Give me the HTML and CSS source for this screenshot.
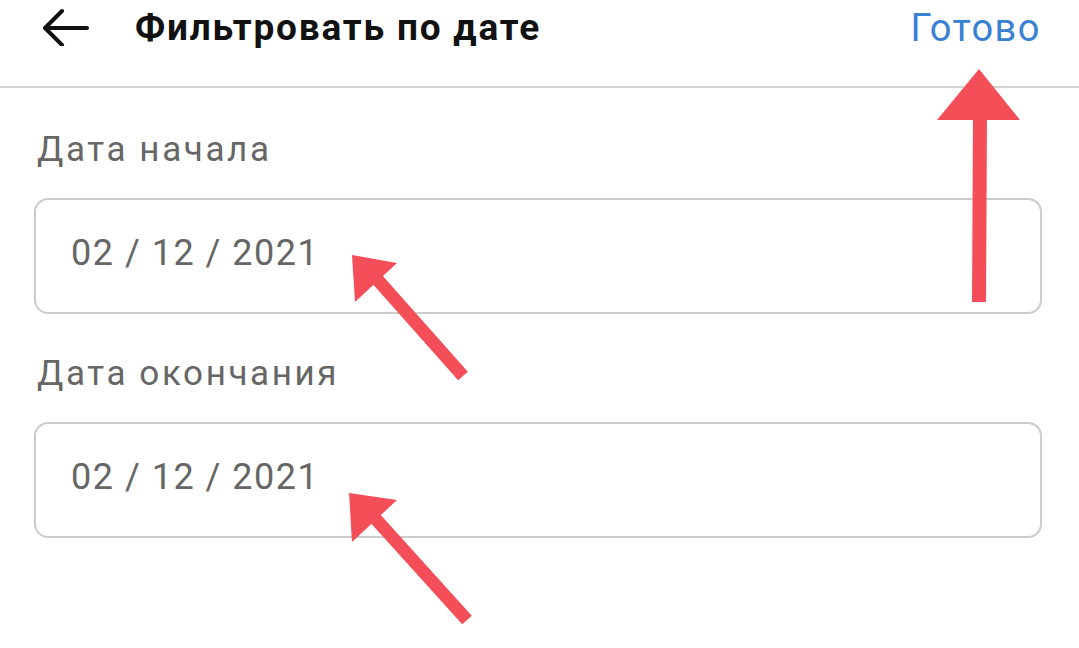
FILE: index.html
```html
<!DOCTYPE html>
<html lang="ru">
<head>
<meta charset="utf-8">
<title>Фильтровать по дате</title>
<link rel="stylesheet" href="styles.css">
</head>
<body>
<div class="page">
  <header class="topbar">
    <div class="left">
      <svg class="back" width="50" height="40" viewBox="0 0 50 40">
        <path d="M47 24H5M22 7L5 24L22 41" fill="none" stroke="#111" stroke-width="4" stroke-linecap="round" stroke-linejoin="round" transform="translate(0,-2)"/>
      </svg>
      <h1 class="title">Фильтровать по дате</h1>
    </div>
    <div class="done">Готово</div>
  </header>
  <main class="form">
    <div class="field">
      <div class="label">Дата начала</div>
      <div class="input">02 / 12 / 2021</div>
    </div>
    <div class="field">
      <div class="label">Дата окончания</div>
      <div class="input">02 / 12 / 2021</div>
    </div>
  </main>
  <svg class="arrows" width="1079" height="648" viewBox="0 0 1079 648">
    <g fill="#f44e59" stroke="none">
      <polygon points="979,69 1020,120 937,120"/>
      <polygon points="352,255 397,263 355,302"/>
      <polygon points="349,493 397,500 352,542"/>
    </g>
    <g stroke="#f44e59" stroke-width="14" fill="none">
      <line x1="980" y1="116" x2="979" y2="302"/>
    </g>
    <g stroke="#f44e59" stroke-width="13" fill="none">
      <line x1="376" y1="278" x2="463" y2="376"/>
      <line x1="373" y1="516" x2="467" y2="620"/>
    </g>
  </svg>
</div>
</body>
</html>
```

FILE: styles.css
```css
html, body {
  margin: 0;
  padding: 0;
  background: #ffffff;
}
.page {
  position: relative;
  width: 1079px;
  height: 648px;
  overflow: hidden;
  font-family: Roboto, "Noto Sans", sans-serif;
}
.topbar {
  height: 86px;
  border-bottom: 2px solid #d4d4d4;
  display: flex;
  align-items: flex-start;
  justify-content: space-between;
  padding: 0 38px 0 40px;
}
.left {
  display: flex;
  align-items: flex-start;
}
.back {
  display: block;
  margin-top: 6px;
}
.title {
  margin: 0 0 0 45px;
  font-size: 37px;
  font-weight: 700;
  line-height: 56px;
  letter-spacing: 1.8px;
  color: #111111;
}
.done {
  font-size: 38px;
  line-height: 56px;
  color: #3a80d2;
  letter-spacing: 1.5px;
}
.form {
  padding: 42px 37px 0 34px;
}
.field {
  display: flex;
  flex-direction: column;
}
.label {
  font-size: 35px;
  line-height: 40px;
  color: #666666;
  margin-left: 3px;
  letter-spacing: 2.6px;
}
.field + .field .label {
  margin-top: 40px;
}
.input {
  box-sizing: border-box;
  height: 116px;
  margin-top: 28px;
  border: 2px solid #cccccc;
  border-radius: 14px;
  font-size: 36px;
  line-height: 44px;
  letter-spacing: 1.5px;
  color: #666666;
  padding: 31px 0 0 35px;
}
.arrows {
  position: absolute;
  left: 0;
  top: 0;
  pointer-events: none;
}
```
